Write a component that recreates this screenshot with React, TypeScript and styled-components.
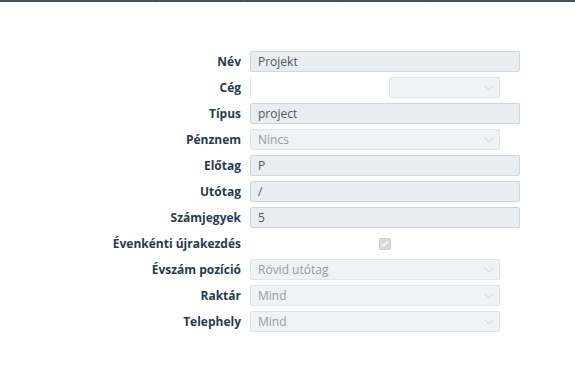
import React from 'react';
import styled, { createGlobalStyle } from 'styled-components';

const GlobalStyle = createGlobalStyle`
  html, body {
    margin: 0;
    padding: 0;
    background: #fff;
    font-family: "Open Sans", "Liberation Sans", sans-serif;
    font-size: 12px;
  }
`;

const TopBar = styled.div`
  display: flex;
  height: 2px;
  background: #46535e;
`;

const TopSegment = styled.div<{ $w: number }>`
  width: ${(p) => p.$w}px;
  height: 100%;
  border-right: 1px solid #37434d;
`;

const Form = styled.div`
  display: grid;
  grid-template-columns: 241px 270px;
  column-gap: 9px;
  row-gap: 5px;
  grid-auto-rows: 21px;
  padding-top: 49px;
`;

const Label = styled.label`
  display: flex;
  align-items: center;
  justify-content: flex-end;
  font-weight: 700;
  color: #253b4f;
  white-space: nowrap;
`;

const TextBox = styled.div`
  box-sizing: border-box;
  height: 21px;
  width: 270px;
  display: flex;
  align-items: center;
  padding-left: 7px;
  background: #e9edf1;
  border: 1px solid #cfd7de;
  border-radius: 2px;
  color: #555;
`;

const SelectBox = styled.div<{ $w?: number }>`
  box-sizing: border-box;
  height: 21px;
  width: ${(p) => p.$w ?? 250}px;
  display: flex;
  align-items: center;
  justify-content: space-between;
  padding: 0 5px 0 7px;
  background: #eff3f6;
  border: 1px solid #dee4e9;
  border-radius: 2px;
  color: #9a9a9a;
`;

const Combo = styled.div`
  display: flex;
  height: 21px;
`;

const EmptyField = styled.div`
  width: 138px;
  border-left: 1px solid #e1e6ea;
  background: #fff;
`;

const CheckCell = styled.div`
  display: flex;
  align-items: center;
  justify-content: center;
`;

const CheckBox = styled.div`
  width: 12px;
  height: 12px;
  border-radius: 2px;
  background: #d9d9d9;
  border: 1px solid #cdcdcd;
  box-sizing: border-box;
  display: flex;
  align-items: center;
  justify-content: center;
`;

const Chevron: React.FC = () => (
  <svg width="10" height="6" viewBox="0 0 10 6">
    <path d="M0.5 0.5 L5 5 L9.5 0.5" fill="none" stroke="#cdd4da" strokeWidth="1" />
  </svg>
);

const Select: React.FC<{ value?: string; width?: number }> = ({ value, width }) => (
  <SelectBox $w={width}>
    <span>{value}</span>
    <Chevron />
  </SelectBox>
);

const App: React.FC = () => {
  return (
    <>
      <GlobalStyle />
      <TopBar>
        <TopSegment $w={65} />
        <TopSegment $w={90} />
        <TopSegment $w={90} />
        <TopSegment $w={90} />
        <TopSegment $w={90} />
      </TopBar>
      <Form>
        <Label>Név</Label>
        <TextBox>Projekt</TextBox>

        <Label>Cég</Label>
        <Combo>
          <EmptyField />
          <Select width={111} />
        </Combo>

        <Label>Típus</Label>
        <TextBox>project</TextBox>

        <Label>Pénznem</Label>
        <Select value="Nincs" />

        <Label>Előtag</Label>
        <TextBox>P</TextBox>

        <Label>Utótag</Label>
        <TextBox>/</TextBox>

        <Label>Számjegyek</Label>
        <TextBox>5</TextBox>

        <Label>Évenkénti újrakezdés</Label>
        <CheckCell>
          <CheckBox>
            <svg width="8" height="7" viewBox="0 0 8 7">
              <path d="M1 3.5 L3 5.5 L7 1" fill="none" stroke="#f6f6f6" strokeWidth="1.7" />
            </svg>
          </CheckBox>
        </CheckCell>

        <Label>Évszám pozíció</Label>
        <Select value="Rövid utótag" />

        <Label>Raktár</Label>
        <Select value="Mind" />

        <Label>Telephely</Label>
        <Select value="Mind" />
      </Form>
    </>
  );
};

export default App;
